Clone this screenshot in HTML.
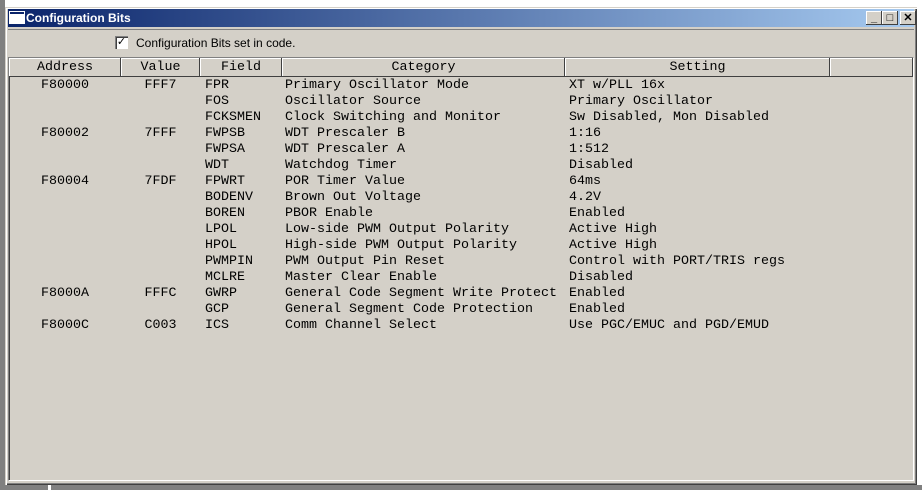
<!DOCTYPE html>
<html><head><style>
body{margin:0;width:922px;height:490px;background:#fff;position:relative;overflow:hidden;font-family:"Liberation Sans",sans-serif}
.abs{position:absolute}
#win{left:5px;top:7px;width:912px;height:478px;background:#d4d0c8;border-top:1px solid #d4d0c8;border-left:1px solid #d4d0c8;box-shadow:inset 1px 1px 0 #fff,inset -1px -1px 0 #404040,inset -2px -2px 0 #808080;box-sizing:border-box}
#title{left:8px;top:9px;width:906px;height:18px;background:linear-gradient(to right,#0a246a,#a6caf0);color:#fff;font-weight:bold;font-size:12px;line-height:18px}
.btn{top:11px;width:16px;height:14px;background:#d4d0c8;box-shadow:inset -1px -1px 0 #404040,inset 1px 1px 0 #fff;font-size:11px;color:#000;text-align:center;line-height:14px;font-weight:bold}
#list{left:8px;top:57px;width:906px;height:424px;border-top:1px solid #808080;border-left:1px solid #808080;border-right:1px solid #fff;border-bottom:1px solid #fff;box-sizing:border-box;box-shadow:inset 1px 1px 0 #404040}
.hd{top:58px;height:19px;background:#d4d0c8;box-shadow:inset -1px -1px 0 #404040,inset 1px 1px 0 #fff;font:13.33px "Liberation Mono",monospace;text-align:center;line-height:19px;box-sizing:border-box}
.r{font:13.33px "Liberation Mono",monospace;white-space:pre;line-height:16px;color:#000}
</style></head><body>
<div class="abs" style="left:0;top:0;width:5px;height:490px;background:#808080"></div>
<div class="abs" style="left:0;top:485px;width:922px;height:5px;background:#808080"></div>
<div class="abs" style="left:48px;top:485px;width:3px;height:5px;background:#fff"></div>
<div id="win" class="abs"></div>
<div id="title" class="abs"><span class="abs" style="left:2px;top:3px;width:14px;height:11px;background:#fff;border-top:2px solid #0a246a;box-sizing:border-box;box-shadow:0 0 0 1px #fff"></span><span style="position:absolute;left:18px">Configuration Bits</span></div>
<div class="abs btn" style="left:866px">_</div>
<div class="abs btn" style="left:882px">□</div>
<div class="abs btn" style="left:900px">✕</div>
<div class="abs" style="left:8px;top:29px;width:906px;height:1px;background:#808080"></div>
<div class="abs" style="left:115px;top:36px;width:13px;height:13px;background:#fff;box-shadow:inset 1px 1px 0 #808080,inset 2px 2px 0 #404040;font-size:11px;line-height:13px;text-align:center">✓</div>
<div class="abs" style="left:136px;top:35px;font-size:12px;line-height:16px">Configuration Bits set in code.</div>
<div id="list" class="abs"></div>
<div class="abs hd" style="left:9px;width:112px">Address</div>
<div class="abs hd" style="left:121px;width:79px">Value</div>
<div class="abs hd" style="left:200px;width:82px">Field</div>
<div class="abs hd" style="left:282px;width:283px">Category</div>
<div class="abs hd" style="left:565px;width:265px">Setting</div>
<div class="abs hd" style="left:830px;width:83px"></div>
<div class="abs r" style="left:9px;top:78px;width:112px;text-align:center">F80000


F80002


F80004






F8000A

F8000C</div>
<div class="abs r" style="left:121px;top:78px;width:79px;text-align:center">FFF7


7FFF


7FDF






FFFC

C003</div>
<div class="abs r" style="left:205px;top:78px">FPR
FOS
FCKSMEN
FWPSB
FWPSA
WDT
FPWRT
BODENV
BOREN
LPOL
HPOL
PWMPIN
MCLRE
GWRP
GCP
ICS</div>
<div class="abs r" style="left:285px;top:78px">Primary Oscillator Mode
Oscillator Source
Clock Switching and Monitor
WDT Prescaler B
WDT Prescaler A
Watchdog Timer
POR Timer Value
Brown Out Voltage
PBOR Enable
Low-side PWM Output Polarity
High-side PWM Output Polarity
PWM Output Pin Reset
Master Clear Enable
General Code Segment Write Protect
General Segment Code Protection
Comm Channel Select</div>
<div class="abs r" style="left:569px;top:78px">XT w/PLL 16x
Primary Oscillator
Sw Disabled, Mon Disabled
1:16
1:512
Disabled
64ms
4.2V
Enabled
Active High
Active High
Control with PORT/TRIS regs
Disabled
Enabled
Enabled
Use PGC/EMUC and PGD/EMUD</div>
</body></html>
